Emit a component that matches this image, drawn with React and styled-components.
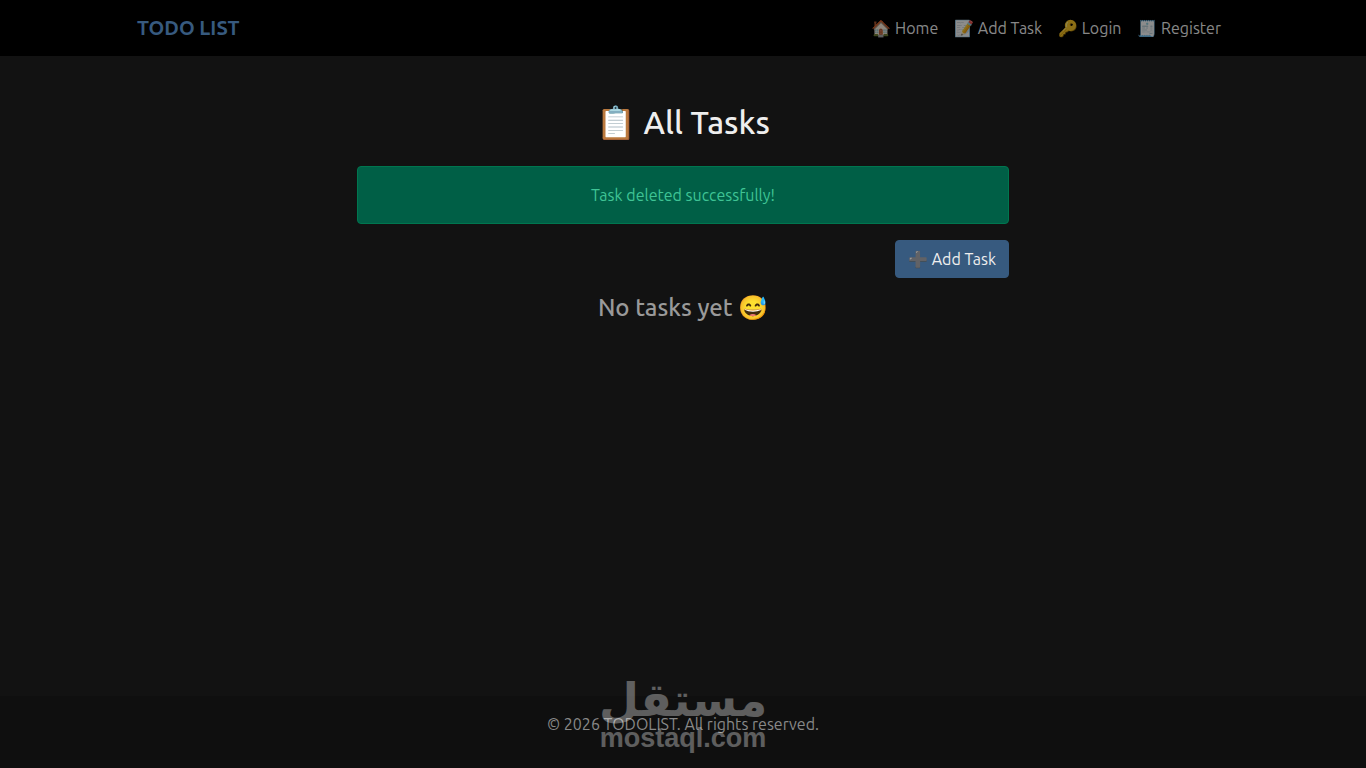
import React from 'react';
import styled, { createGlobalStyle } from 'styled-components';

const GlobalStyle = createGlobalStyle`
  *,
  *::before,
  *::after {
    box-sizing: border-box;
  }

  body {
    margin: 0;
    background-color: #121212;
    color: #eeeeee;
    font-family: Ubuntu, 'Noto Sans', 'Noto Color Emoji', sans-serif;
    font-size: 16px;
    line-height: 24px;
  }
`;

const Page = styled.div`
  display: flex;
  flex-direction: column;
  min-height: 100vh;
`;

const Navbar = styled.header`
  background-color: #000000;
`;

const NavInner = styled.div`
  display: flex;
  align-items: center;
  justify-content: space-between;
  max-width: 1140px;
  min-height: 56px;
  margin: 0 auto;
  padding: 0 24px;
`;

const Brand = styled.a`
  color: #375a7f;
  font-size: 20px;
  font-weight: 700;
  text-decoration: none;
`;

const NavLinks = styled.nav`
  display: flex;
`;

const NavLink = styled.a`
  padding: 8px;
  color: rgba(255, 255, 255, 0.55);
  text-decoration: none;
`;

const Main = styled.main`
  flex: 1;
  display: flex;
  flex-direction: column;
  width: 100%;
  max-width: 700px;
  margin: 0 auto;
  padding: 48px 24px;
`;

const Title = styled.h1`
  margin: 0 0 26px;
  font-size: 32px;
  font-weight: 500;
  line-height: 36px;
  text-align: center;
`;

const Alert = styled.div`
  margin-bottom: 16px;
  padding: 16px;
  border: 1px solid #00764f;
  border-radius: 4px;
  background-color: #005f46;
  color: #3fc495;
  text-align: center;
`;

const AddButton = styled.button`
  align-self: flex-end;
  height: 38px;
  margin-bottom: 16px;
  padding: 0 12px;
  border: 1px solid #375a7f;
  border-radius: 4px;
  background-color: #375a7f;
  color: #eeeeee;
  font: inherit;
  cursor: pointer;
`;

const EmptyText = styled.h2`
  margin: 0;
  color: #999999;
  font-size: 24px;
  font-weight: 500;
  line-height: 28px;
  text-align: center;
`;

const Footer = styled.footer`
  position: relative;
  padding: 16px 16px 32px;
  background-color: #0f0f0f;
  color: #888888;
  text-align: center;
`;

const Watermark = styled.div`
  position: absolute;
  bottom: 16px;
  left: 50%;
  display: flex;
  flex-direction: column;
  align-items: center;
  color: #ffffff;
  opacity: 0.33;
  transform: translateX(-50%);
  pointer-events: none;
`;

const WatermarkName = styled.span`
  font-family: 'DejaVu Sans', sans-serif;
  font-size: 46px;
  font-weight: 700;
  line-height: 48px;
`;

const WatermarkDomain = styled.span`
  font-family: 'Liberation Sans', sans-serif;
  font-size: 27px;
  font-weight: 700;
  line-height: 28px;
`;

const links = ['🏠 Home', '📝 Add Task', '🔑 Login', '🧾 Register'];

const App = () => {
  return (
    <Page>
      <GlobalStyle />
      <Navbar>
        <NavInner>
          <Brand href="#">TODO LIST</Brand>
          <NavLinks>
            {links.map((link) => (
              <NavLink href="#" key={link}>
                {link}
              </NavLink>
            ))}
          </NavLinks>
        </NavInner>
      </Navbar>
      <Main>
        <Title>📋 All Tasks</Title>
        <Alert role="alert">Task deleted successfully!</Alert>
        <AddButton type="button">➕ Add Task</AddButton>
        <EmptyText>No tasks yet 😅</EmptyText>
      </Main>
      <Footer>
        © 2026 TODOLIST. All rights reserved.
        <Watermark>
          <WatermarkName lang="ar">مستقل</WatermarkName>
          <WatermarkDomain>mostaql.com</WatermarkDomain>
        </Watermark>
      </Footer>
    </Page>
  );
};

export default App;
